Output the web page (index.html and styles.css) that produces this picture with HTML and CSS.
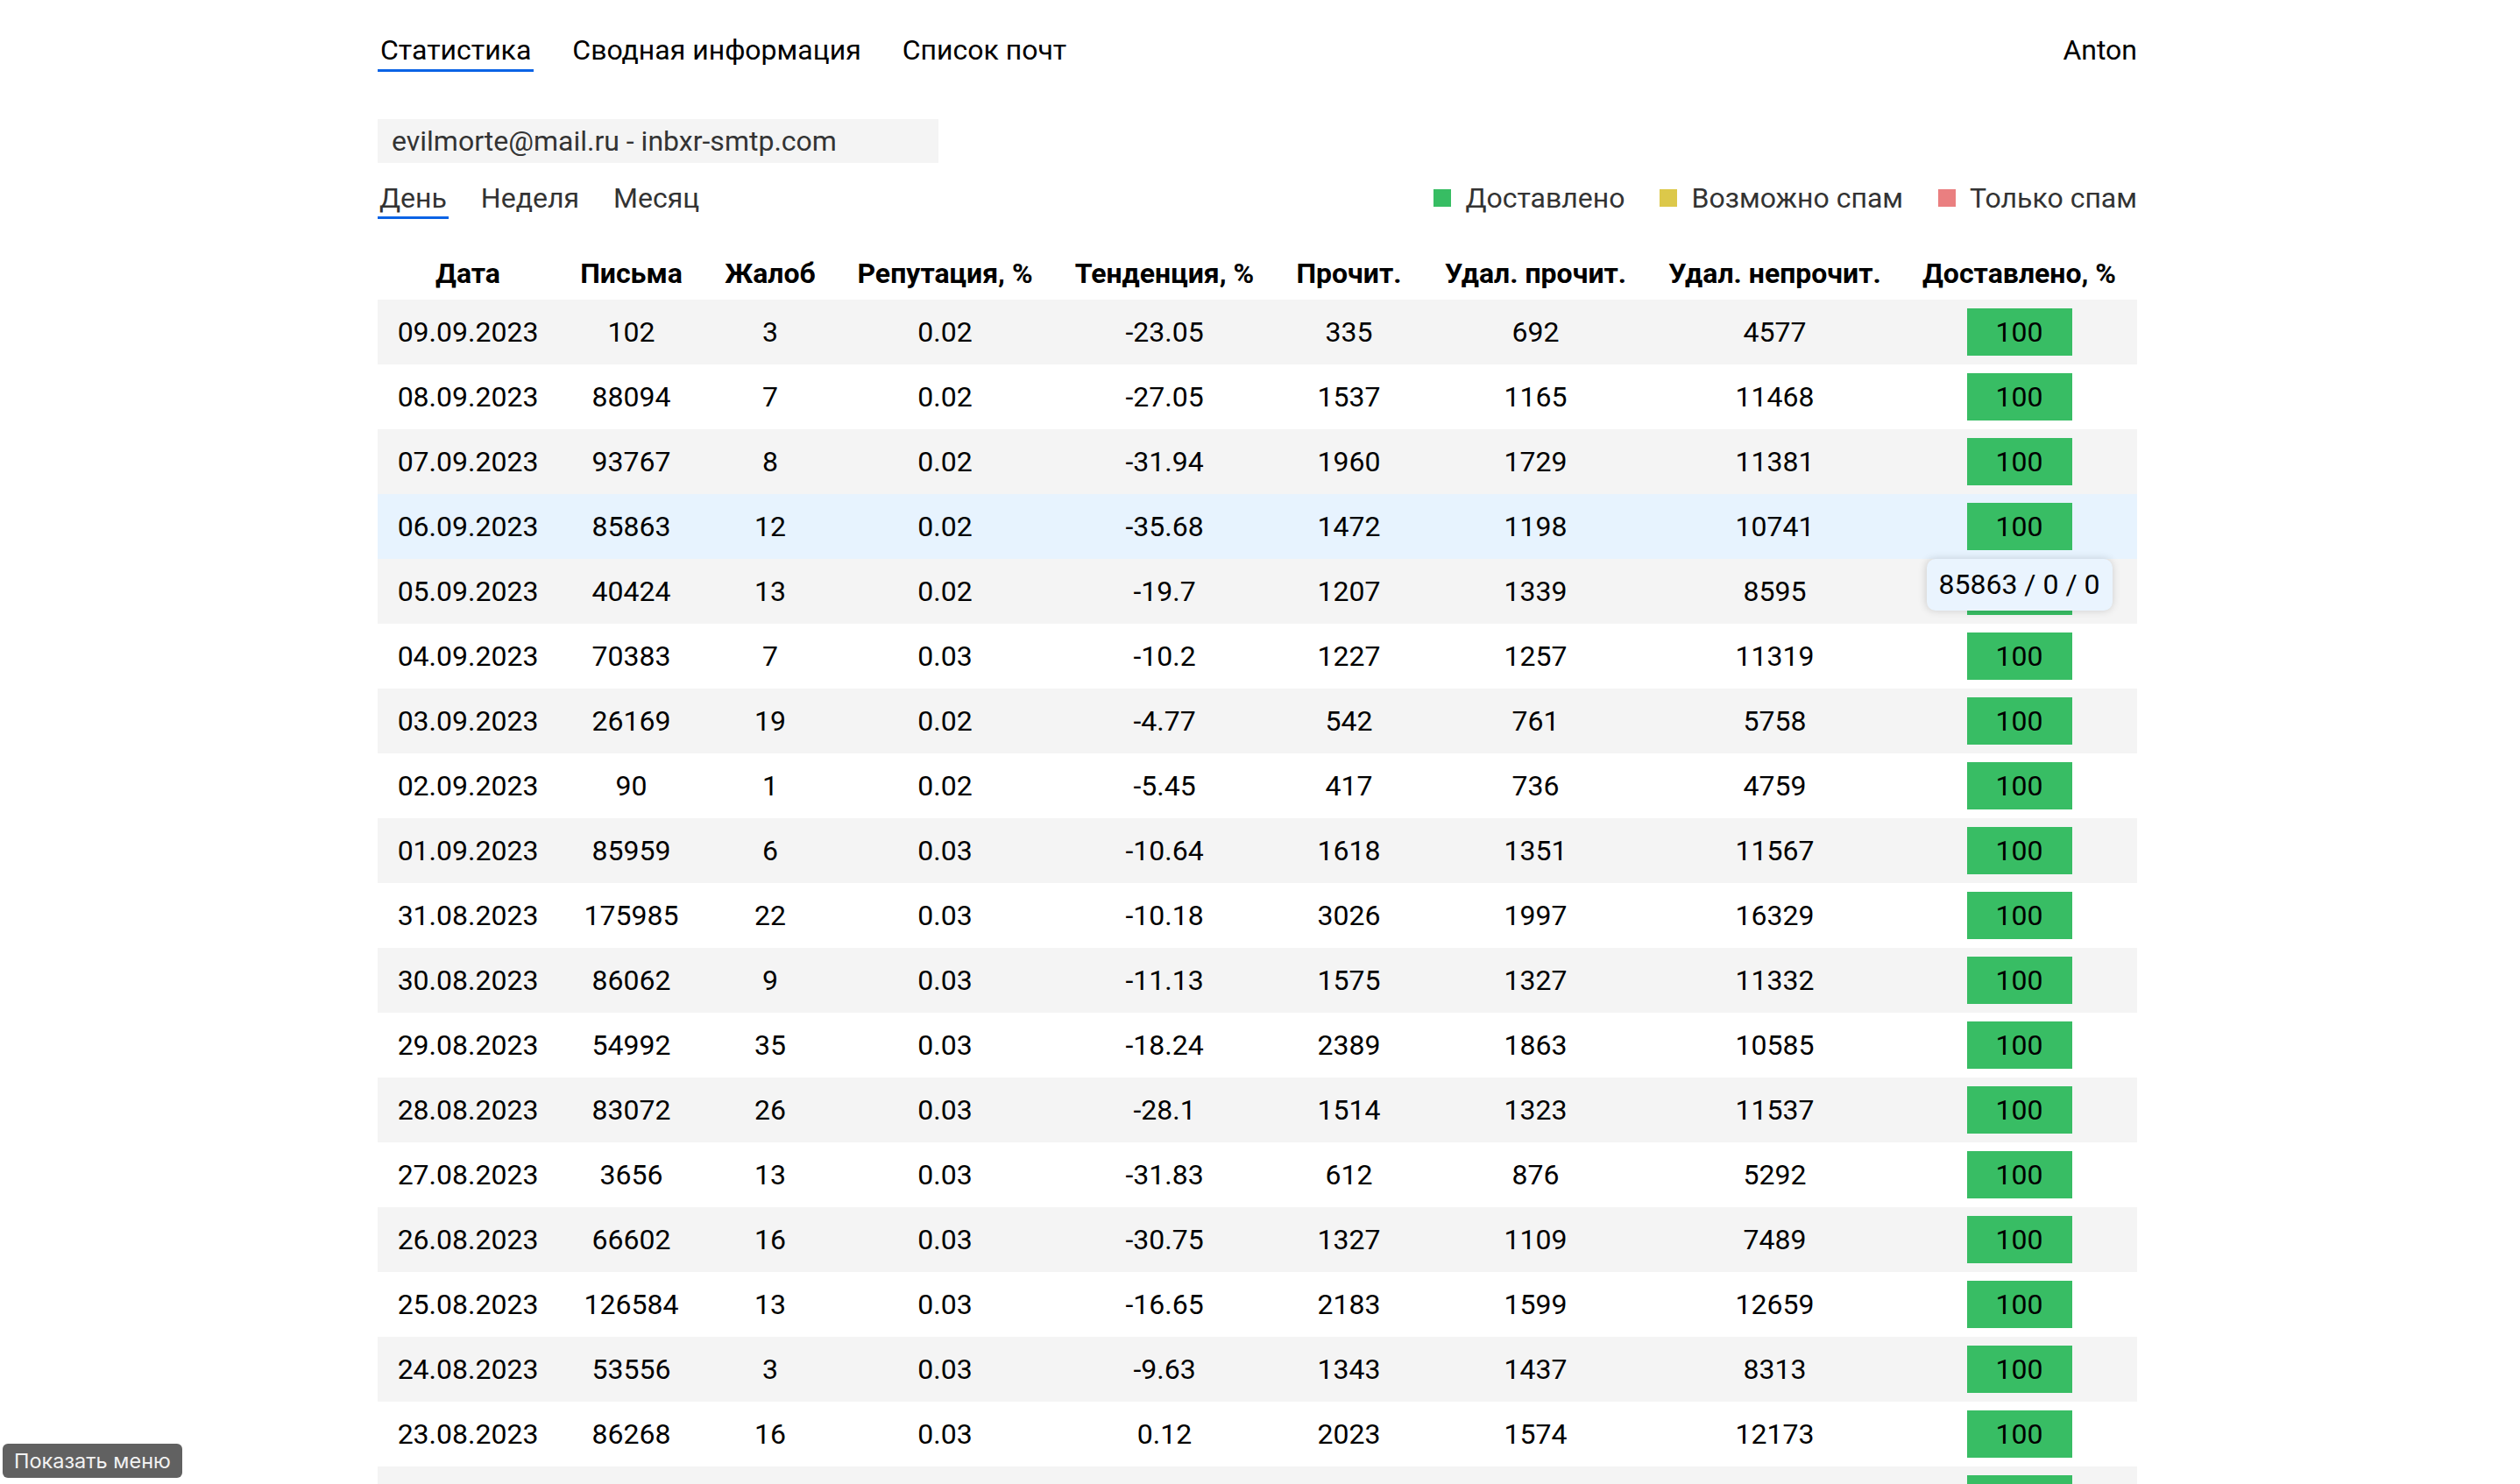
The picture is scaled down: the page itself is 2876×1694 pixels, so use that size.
FILE: index.html
```html
<!DOCTYPE html>
<html lang="ru">
<head>
<meta charset="utf-8">
<title>Статистика</title>
<link rel="stylesheet" href="styles.css">
</head>
<body>
<div class="page">
  <nav class="topnav">
    <div class="tabs">
      <a class="tab active">Статистика</a>
      <a class="tab">Сводная информация</a>
      <a class="tab">Список почт</a>
    </div>
    <div class="user">Anton</div>
  </nav>

  <div class="mailbox">evilmorte@mail.ru - inbxr-smtp.com</div>

  <div class="toolbar">
    <div class="periods">
      <a class="period active">День</a>
      <a class="period">Неделя</a>
      <a class="period">Месяц</a>
    </div>
    <div class="legend">
      <span class="legend-item"><i class="sw sw-green"></i>Доставлено</span>
      <span class="legend-item"><i class="sw sw-yellow"></i>Возможно спам</span>
      <span class="legend-item"><i class="sw sw-red"></i>Только спам</span>
    </div>
  </div>

  <table class="stats">
    <colgroup>
      <col class="c1"><col class="c2"><col class="c3"><col class="c4"><col class="c5"><col class="c6"><col class="c7"><col class="c8"><col class="c9">
    </colgroup>
    <thead>
      <tr>
        <th>Дата</th><th>Письма</th><th>Жалоб</th><th>Репутация, %</th><th>Тенденция, %</th><th>Прочит.</th><th>Удал. прочит.</th><th>Удал. непрочит.</th><th>Доставлено, %</th>
      </tr>
    </thead>
    <tbody>
      <tr><td>09.09.2023</td><td>102</td><td>3</td><td>0.02</td><td>-23.05</td><td>335</td><td>692</td><td>4577</td><td><span class="badge">100</span></td></tr>
      <tr><td>08.09.2023</td><td>88094</td><td>7</td><td>0.02</td><td>-27.05</td><td>1537</td><td>1165</td><td>11468</td><td><span class="badge">100</span></td></tr>
      <tr><td>07.09.2023</td><td>93767</td><td>8</td><td>0.02</td><td>-31.94</td><td>1960</td><td>1729</td><td>11381</td><td><span class="badge">100</span></td></tr>
      <tr class="hover"><td>06.09.2023</td><td>85863</td><td>12</td><td>0.02</td><td>-35.68</td><td>1472</td><td>1198</td><td>10741</td><td class="tip-cell"><span class="badge">100</span><div class="tooltip">85863 / 0 / 0</div></td></tr>
      <tr><td>05.09.2023</td><td>40424</td><td>13</td><td>0.02</td><td>-19.7</td><td>1207</td><td>1339</td><td>8595</td><td><span class="badge">100</span></td></tr>
      <tr><td>04.09.2023</td><td>70383</td><td>7</td><td>0.03</td><td>-10.2</td><td>1227</td><td>1257</td><td>11319</td><td><span class="badge">100</span></td></tr>
      <tr><td>03.09.2023</td><td>26169</td><td>19</td><td>0.02</td><td>-4.77</td><td>542</td><td>761</td><td>5758</td><td><span class="badge">100</span></td></tr>
      <tr><td>02.09.2023</td><td>90</td><td>1</td><td>0.02</td><td>-5.45</td><td>417</td><td>736</td><td>4759</td><td><span class="badge">100</span></td></tr>
      <tr><td>01.09.2023</td><td>85959</td><td>6</td><td>0.03</td><td>-10.64</td><td>1618</td><td>1351</td><td>11567</td><td><span class="badge">100</span></td></tr>
      <tr><td>31.08.2023</td><td>175985</td><td>22</td><td>0.03</td><td>-10.18</td><td>3026</td><td>1997</td><td>16329</td><td><span class="badge">100</span></td></tr>
      <tr><td>30.08.2023</td><td>86062</td><td>9</td><td>0.03</td><td>-11.13</td><td>1575</td><td>1327</td><td>11332</td><td><span class="badge">100</span></td></tr>
      <tr><td>29.08.2023</td><td>54992</td><td>35</td><td>0.03</td><td>-18.24</td><td>2389</td><td>1863</td><td>10585</td><td><span class="badge">100</span></td></tr>
      <tr><td>28.08.2023</td><td>83072</td><td>26</td><td>0.03</td><td>-28.1</td><td>1514</td><td>1323</td><td>11537</td><td><span class="badge">100</span></td></tr>
      <tr><td>27.08.2023</td><td>3656</td><td>13</td><td>0.03</td><td>-31.83</td><td>612</td><td>876</td><td>5292</td><td><span class="badge">100</span></td></tr>
      <tr><td>26.08.2023</td><td>66602</td><td>16</td><td>0.03</td><td>-30.75</td><td>1327</td><td>1109</td><td>7489</td><td><span class="badge">100</span></td></tr>
      <tr><td>25.08.2023</td><td>126584</td><td>13</td><td>0.03</td><td>-16.65</td><td>2183</td><td>1599</td><td>12659</td><td><span class="badge">100</span></td></tr>
      <tr><td>24.08.2023</td><td>53556</td><td>3</td><td>0.03</td><td>-9.63</td><td>1343</td><td>1437</td><td>8313</td><td><span class="badge">100</span></td></tr>
      <tr><td>23.08.2023</td><td>86268</td><td>16</td><td>0.03</td><td>0.12</td><td>2023</td><td>1574</td><td>12173</td><td><span class="badge">100</span></td></tr>
      <tr class="tail"><td></td><td></td><td></td><td></td><td></td><td></td><td></td><td></td><td><span class="badge"></span></td></tr>
    </tbody>
  </table>
</div>

<button class="menu-btn">Показать меню</button>
</body>
</html>
```

FILE: styles.css
```css
html {
  scrollbar-width: none;
}
html::-webkit-scrollbar {
  display: none;
}

body {
  margin: 0;
  padding-right: 6px;
  background: #ffffff;
  font-family: Roboto, "Noto Sans", sans-serif;
  font-size: 32px;
  color: #000;
}

.page {
  width: 2008px;
  margin: 0 auto;
}

/* top navigation */
.topnav {
  display: flex;
  justify-content: space-between;
  align-items: flex-start;
  padding-top: 38px;
}

.tabs {
  display: flex;
  gap: 41px;
}

.tab {
  display: block;
  padding: 0 3px 3px;
  border-bottom: 3px solid transparent;
  color: #000;
  cursor: pointer;
}

.tab.active {
  border-bottom-color: #0b63e5;
}

.user {
  color: #000;
}

/* selected mailbox */
.mailbox {
  margin-top: 54px;
  width: 640px;
  height: 50px;
  line-height: 50px;
  padding: 0 16px;
  box-sizing: border-box;
  background: #f4f4f4;
  color: #333;
}

/* periods + legend */
.toolbar {
  display: flex;
  justify-content: space-between;
  align-items: flex-start;
  margin-top: 21px;
}

.periods {
  display: flex;
  gap: 35px;
}

.period {
  display: block;
  padding: 0 2px 2px;
  border-bottom: 3px solid transparent;
  color: #333;
  cursor: pointer;
}

.period.active {
  border-bottom-color: #0b63e5;
}

.legend {
  display: flex;
  align-items: center;
  gap: 40px;
  color: #333;
}

.legend-item {
  display: flex;
  align-items: center;
}

.sw {
  display: block;
  width: 20px;
  height: 20px;
  margin-right: 16px;
}

.sw-green { background: #37bd63; }
.sw-yellow { background: #dcc84a; }
.sw-red { background: #ea7f80; }

/* table */
.stats {
  margin-top: 18px;
  width: 2008px;
  border-collapse: collapse;
  table-layout: fixed;
}

.c1 { width: 206px; }
.c2 { width: 167px; }
.c3 { width: 150px; }
.c4 { width: 249px; }
.c5 { width: 252px; }
.c6 { width: 169px; }
.c7 { width: 257px; }
.c8 { width: 289px; }
.c9 { width: 269px; }

.stats th {
  height: 74px;
  padding: 0 0 11px;
  box-sizing: border-box;
  vertical-align: bottom;
  font-weight: 700;
  text-align: center;
  white-space: nowrap;
  color: #000;
}

.stats td {
  height: 74px;
  padding: 0;
  text-align: center;
  vertical-align: middle;
  white-space: nowrap;
  color: #000;
}

.stats tbody tr:nth-child(odd) {
  background: #f4f4f4;
}

.stats tbody tr.hover {
  background: #e7f3fe;
}

.badge {
  display: inline-block;
  width: 120px;
  height: 54px;
  line-height: 54px;
  background: #38bd64;
  color: #000;
  vertical-align: middle;
}

.tip-cell {
  position: relative;
}

.tooltip {
  position: absolute;
  top: 100%;
  left: 50%;
  transform: translateX(-50%);
  z-index: 5;
  padding: 10px 14px;
  line-height: 39px;
  white-space: nowrap;
  background: #eaf4fe;
  border-radius: 10px;
  box-shadow: 0 0 10px rgba(0, 0, 0, 0.16);
  color: #000;
}

/* floating menu button */
.menu-btn {
  position: fixed;
  left: 3px;
  bottom: 7px;
  height: 39px;
  padding: 0 13px;
  border: 0;
  border-radius: 6px;
  background: #616161;
  color: #f2f2f2;
  font-family: Inter, "Liberation Sans", sans-serif;
  font-size: 23.5px;
  line-height: 39px;
  cursor: pointer;
}
```
